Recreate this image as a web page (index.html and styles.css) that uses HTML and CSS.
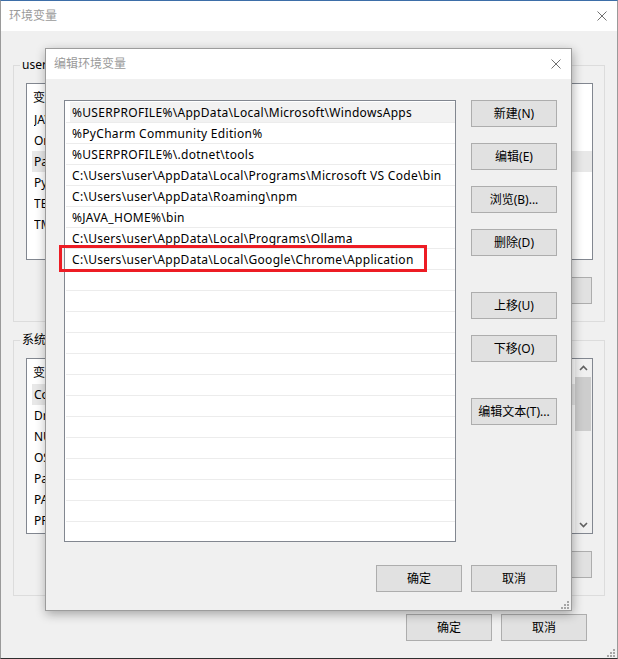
FILE: index.html
```html
<!DOCTYPE html>
<html lang="zh-CN">
<head>
<meta charset="utf-8">
<title>环境变量</title>
<link rel="stylesheet" href="styles.css">
</head>
<body>
<div class="win">
  <div class="titlebar">
    <span class="title">环境变量</span>
    <svg class="close" width="10" height="10" viewBox="0 0 10 10"><path d="M0.5 0.5L9.5 9.5M9.5 0.5L0.5 9.5" stroke="#707070" stroke-width="1" fill="none"/></svg>
  </div>
  <div class="win-body">
    <fieldset class="group">
      <legend>user 的用户变量(U)</legend>
      <div class="listview lv-user">
        <div class="lv-main">
          <div class="lv-head"><span class="c1">变量</span></div>
          <div class="lv-row"><span class="c1">JAVA_HOME</span></div>
          <div class="lv-row"><span class="c1">OneDrive</span></div>
          <div class="lv-row hl"><span class="c1">Path</span></div>
          <div class="lv-row"><span class="c1">PyCharm</span></div>
          <div class="lv-row"><span class="c1">TEMP</span></div>
          <div class="lv-row"><span class="c1">TMP</span></div>
        </div>
      </div>
      <div class="btnrow">
        <button class="btn">新建(N)...</button>
        <button class="btn">编辑(E)...</button>
        <button class="btn">删除(D)</button>
      </div>
    </fieldset>
    <fieldset class="group group-sys">
      <legend>系统变量(S)</legend>
      <div class="listview lv-sys">
        <div class="lv-main">
          <div class="lv-head"><span class="c1">变量</span></div>
          <div class="lv-row hl"><span class="c1">ComSpec</span></div>
          <div class="lv-row"><span class="c1">DriverData</span></div>
          <div class="lv-row"><span class="c1">NUMBER_OF_PROCESSORS</span></div>
          <div class="lv-row"><span class="c1">OS</span></div>
          <div class="lv-row"><span class="c1">Path</span></div>
          <div class="lv-row"><span class="c1">PATHEXT</span></div>
          <div class="lv-row"><span class="c1">PROCESSOR_ARCHITECTURE</span></div>
        </div>
        <div class="vscroll">
          <div class="sb-btn"><svg width="9" height="6" viewBox="0 0 9 6"><path d="M1 5L4.5 1.5L8 5" stroke="#606060" stroke-width="1.6" fill="none"/></svg></div>
          <div class="sb-track"><div class="sb-thumb"></div></div>
          <div class="sb-btn"><svg width="9" height="6" viewBox="0 0 9 6"><path d="M1 1L4.5 4.5L8 1" stroke="#606060" stroke-width="1.6" fill="none"/></svg></div>
        </div>
      </div>
      <div class="btnrow">
        <button class="btn">新建(W)...</button>
        <button class="btn">编辑(I)...</button>
        <button class="btn">删除(L)</button>
      </div>
    </fieldset>
    <div class="footer">
      <button class="btn">确定</button>
      <button class="btn">取消</button>
    </div>
  </div>
  <svg class="grip win-grip" width="8" height="8" viewBox="0 0 8 8"><g fill="#a6a6a6"><rect x="6" y="0" width="2" height="2"/><rect x="3" y="3" width="2" height="2"/><rect x="6" y="3" width="2" height="2"/><rect x="0" y="6" width="2" height="2"/><rect x="3" y="6" width="2" height="2"/><rect x="6" y="6" width="2" height="2"/></g></svg>
</div>

<div class="dialog">
  <div class="dlg-title">
    <span class="title">编辑环境变量</span>
    <svg class="close" width="10" height="10" viewBox="0 0 10 10"><path d="M0.5 0.5L9.5 9.5M9.5 0.5L0.5 9.5" stroke="#707070" stroke-width="1" fill="none"/></svg>
  </div>
  <div class="dlg-body">
    <div class="dlg-main">
      <div class="pathlist">
        <div class="prow sel">%USERPROFILE%\AppData\Local\Microsoft\WindowsApps</div>
        <div class="prow">%PyCharm Community Edition%</div>
        <div class="prow">%USERPROFILE%\.dotnet\tools</div>
        <div class="prow">C:\Users\user\AppData\Local\Programs\Microsoft VS Code\bin</div>
        <div class="prow">C:\Users\user\AppData\Roaming\npm</div>
        <div class="prow">%JAVA_HOME%\bin</div>
        <div class="prow">C:\Users\user\AppData\Local\Programs\Ollama</div>
        <div class="prow">C:\Users\user\AppData\Local\Google\Chrome\Application</div>
        <div class="prow"></div>
        <div class="prow"></div>
        <div class="prow"></div>
        <div class="prow"></div>
        <div class="prow"></div>
        <div class="prow"></div>
        <div class="prow"></div>
        <div class="prow"></div>
        <div class="prow"></div>
        <div class="prow"></div>
        <div class="prow"></div>
        <div class="prow"></div>
        <div class="prow"></div>
      </div>
      <div class="dlg-btns">
        <button class="btn">新建(N)</button>
        <button class="btn">编辑(E)</button>
        <button class="btn">浏览(B)...</button>
        <button class="btn">删除(D)</button>
        <button class="btn gap-lg">上移(U)</button>
        <button class="btn">下移(O)</button>
        <button class="btn gap-lg">编辑文本(T)...</button>
      </div>
    </div>
    <div class="dlg-footer">
      <button class="btn">确定</button>
      <button class="btn">取消</button>
    </div>
  </div>
  <div class="mark"></div>
  <svg class="grip dlg-grip" width="8" height="8" viewBox="0 0 8 8"><g fill="#a6a6a6"><rect x="6" y="0" width="2" height="2"/><rect x="3" y="3" width="2" height="2"/><rect x="6" y="3" width="2" height="2"/><rect x="0" y="6" width="2" height="2"/><rect x="3" y="6" width="2" height="2"/><rect x="6" y="6" width="2" height="2"/></g></svg>
</div>
</body>
</html>
```

FILE: styles.css
```css
* { box-sizing: border-box; }
html, body { margin: 0; padding: 0; }
body {
  width: 618px;
  height: 659px;
  overflow: hidden;
  position: relative;
  background: #f0f0f0;
  font-family: "Noto Sans", "Noto Sans CJK SC", sans-serif;
  font-size: 12px;
  color: #000;
}

/* ---------- background window ---------- */
.win {
  position: relative;
  width: 618px;
  height: 659px;
  background: #f0f0f0;
  border: 1px solid #9a9a9a;
  border-top-color: #3d6ea8;
  border-bottom-color: #2e2e2e;
}
.titlebar {
  height: 30px;
  background: #fff;
  display: flex;
  align-items: center;
  justify-content: space-between;
  padding: 0 10px 0 8px;
}
.title { color: #9a9a9a; font-size: 12px; line-height: 16px; }
.close { display: block; }

.win-body { padding: 26px 12px 0 12px; }

.group {
  margin: 0;
  border: 1px solid #dcdcdc;
  padding: 10px 11px 17px 12px;
  min-width: 0;
}
.group-sys { margin-top: 10px; }
.group legend {
  padding: 0 2px;
  margin-left: -6px;
  line-height: 16px;
  font-size: 12px;
}

.listview {
  background: #fff;
  border: 1px solid #828790;
  overflow: hidden;
  display: flex;
}
.lv-user { height: 177px; }
.lv-sys { height: 176px; }
.lv-main { flex: 1; min-width: 0; }
.lv-head {
  height: 25px;
  display: flex;
  align-items: center;
  padding-left: 6px;
  white-space: nowrap;
}
.lv-row {
  height: 21px;
  display: flex;
  align-items: center;
  margin-left: 5px;
  padding-left: 2px;
  white-space: nowrap;
}
.lv-row.hl { background: #e8e8e8; }
.c1 { width: 160px; flex: none; overflow: hidden; }

.vscroll {
  width: 17px;
  flex: none;
  background: #f0f0f0;
  display: flex;
  flex-direction: column;
}
.sb-btn {
  height: 17px;
  display: flex;
  align-items: center;
  justify-content: center;
}
.sb-btn svg { display: block; }
.sb-track { flex: 1; }
.sb-thumb {
  margin: 1px 1px 0 0;
  height: 54px;
  background: #cdcdcd;
}

.btnrow {
  display: flex;
  justify-content: flex-end;
  gap: 9px;
  margin-top: 17px;
  padding-right: 1px;
}

.btn {
  width: 86px;
  height: 27px;
  margin: 0;
  padding: 0;
  background: #e1e1e1;
  border: 1px solid #adadad;
  font-family: "Noto Sans", "Noto Sans CJK SC", sans-serif;
  font-size: 12px;
  color: #000;
  text-align: center;
  line-height: 25px;
  white-space: nowrap;
}

.footer {
  display: flex;
  justify-content: flex-end;
  gap: 9px;
  margin-top: 18px;
  padding-right: 18px;
}

.grip { position: absolute; display: block; }
.win-grip { right: 2px; bottom: 1px; }

/* ---------- foreground dialog ---------- */
.dialog {
  position: absolute;
  left: 45px;
  top: 48px;
  width: 527px;
  height: 563px;
  background: #f0f0f0;
  border: 1px solid #9c9c9c;
  box-shadow: 1px 3px 10px rgba(0, 0, 0, 0.32);
}
.dlg-title {
  height: 30px;
  background: #fff;
  display: flex;
  align-items: center;
  justify-content: space-between;
  padding: 0 10px 0 8px;
}
.dlg-body { padding: 21px 14px 0 18px; }
.dlg-main { display: flex; gap: 15px; }
.pathlist {
  width: 392px;
  height: 442px;
  background: #fff;
  border: 1px solid #828790;
  padding: 1px 0 0 1px;
  overflow: hidden;
}
.prow {
  height: 21px;
  border-bottom: 1px solid #ececec;
  padding: 2px 0 0 6px;
  line-height: 18px;
  letter-spacing: 0.3px;
  white-space: nowrap;
  overflow: hidden;
}
.prow.sel { background: linear-gradient(to right, #fff 4px, #f2f2f2 4px); }

.dlg-btns {
  display: flex;
  flex-direction: column;
  gap: 16px;
}
.dlg-btns .gap-lg { margin-top: 20px; }

.dlg-footer {
  display: flex;
  justify-content: flex-end;
  gap: 9px;
  margin-top: 23px;
}

.mark {
  position: absolute;
  left: 13px;
  top: 196px;
  width: 368px;
  height: 27px;
  border: 3px solid #ed1c24;
}
.dlg-grip { right: 2px; bottom: 1px; }
```
